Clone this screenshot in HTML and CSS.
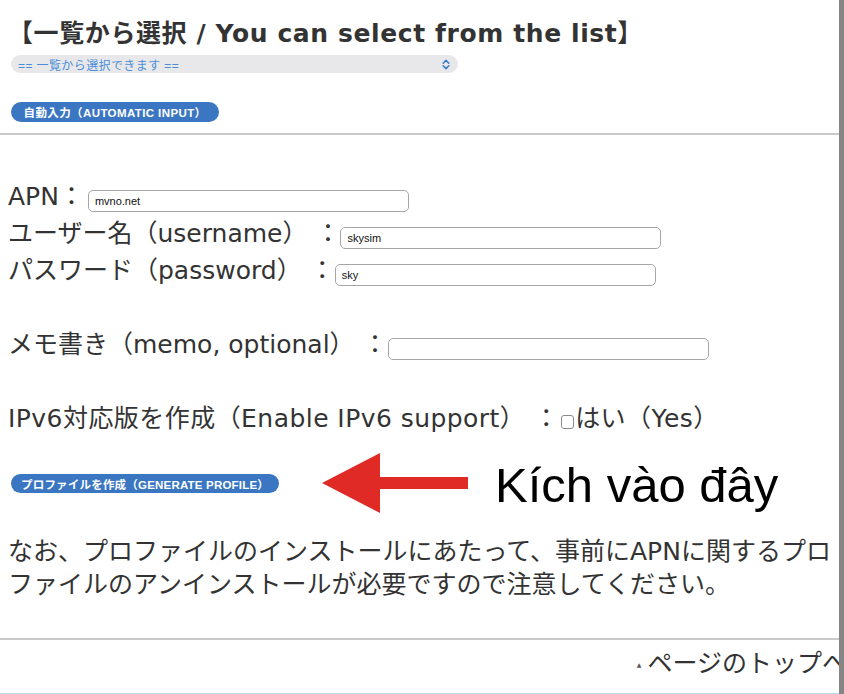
FILE: index.html
```html
<!DOCTYPE html>
<html lang="ja">
<head>
    <meta charset="UTF-8">
    <meta name="viewport" content="width=device-width, initial-scale=1.0">
    <title>APN Profile</title>
    <link rel="stylesheet" href="styles.css">
</head>
<body>
    <div class="page">
        <main class="content">
            <h2 class="title">【一覧から選択 / You can select from the list】</h2>
            <div class="select">
                <span>== 一覧から選択できます ==</span>
                <svg class="chevrons" width="8" height="11" viewBox="0 0 8 11">
                    <path d="M1.2 4.2 L4 1.4 L6.8 4.2 M1.2 6.8 L4 9.6 L6.8 6.8" fill="none" stroke="#3b7fd0" stroke-width="1.6" stroke-linecap="round" stroke-linejoin="round"/>
                </svg>
            </div>
            <button type="button" class="pill-btn auto-btn">自動入力（AUTOMATIC INPUT）</button>
            <hr class="rule">

            <form class="apn-form">
                <div class="row apn">APN：<input type="text" class="field" value="mvno.net"></div>
                <div class="row">ユーザー名（username） ：<input type="text" class="field" value="skysim"></div>
                <div class="row">パスワード（password） ：<input type="text" class="field" value="sky"></div>
                <div class="row blank"></div>
                <div class="row">メモ書き（memo, optional） ：<input type="text" class="field"></div>
                <div class="row blank"></div>
                <div class="row ipv6">IPv6対応版を作成（Enable IPv6 support） ：<input type="checkbox" class="check">はい（Yes）</div>
            </form>

            <div class="generate">
                <button type="button" class="pill-btn gen-btn">プロファイルを作成（GENERATE PROFILE）</button>
                <!-- annotation over the page -->
                <svg class="arrow" width="146" height="62" viewBox="0 0 146 62">
                    <polygon points="0,31 58,1 58,25 146,25 146,37 58,37 58,61" fill="#e02a25"/>
                </svg>
                <span class="callout">Kích vào đây</span>
            </div>

            <p class="note">なお、プロファイルのインストールにあたって、事前にAPNに関するプロファイルのアンインストールが必要ですので注意してください。</p>
            <hr class="rule">
            <div class="to-top"><span class="tri">▲</span>ページのトップへ</div>
            <div class="bottom-line"></div>
        </main>
        <div class="scrollbar"></div>
    </div>
</body>
</html>
```

FILE: styles.css
```css
body {
    margin: 0;
    background-color: #ffffff;
    font-family: "DejaVu Sans", "Noto Sans CJK JP", sans-serif;
    color: #333;
}
.page {
    display: flex;
    height: 694px;
    overflow: hidden;
}
.content {
    flex: 1;
    overflow: hidden;
    position: relative;
}
.scrollbar {
    width: 5px;
    background-color: #858585;
}
.title {
    font-size: 25px;
    line-height: 30px;
    font-weight: bold;
    letter-spacing: 0.6px;
    margin: 19px 0 0 8px;
    white-space: nowrap;
}
.select {
    display: flex;
    justify-content: space-between;
    align-items: center;
    width: 447px;
    height: 18px;
    margin: 6px 0 0 11px;
    padding: 0 8px 0 7px;
    box-sizing: border-box;
    background-color: #e8e8ea;
    border-radius: 9px;
    font-family: "Liberation Sans", "Noto Sans CJK JP", sans-serif;
    font-size: 12px;
    color: #4a8ed8;
    letter-spacing: 0.4px;
}
.pill-btn {
    display: block;
    margin-left: 11px;
    padding: 0;
    border: none;
    border-radius: 10px;
    background-color: #3a76c2;
    color: white;
    font-family: "Liberation Sans", "Noto Sans CJK JP", sans-serif;
    font-weight: bold;
    font-size: 11.5px;
    letter-spacing: 0.4px;
    cursor: pointer;
}
.auto-btn {
    width: 208px;
    height: 20px;
    margin-top: 29px;
}
.rule {
    border: none;
    border-top: 2px solid #c9c9c9;
    margin: 11px 0 0 0;
}
.apn-form {
    margin: 43px 0 0 8px;
    font-size: 25px;
    line-height: 37px;
}
.row {
    height: 37px;
    white-space: nowrap;
}
.ipv6 {
    letter-spacing: 0.45px;
}
.field {
    width: 321px;
    height: 22px;
    margin: 0;
    padding: 0 6px;
    box-sizing: border-box;
    border: 1px solid #a6a6a6;
    border-radius: 5px;
    font-family: "Liberation Sans", sans-serif;
    font-size: 11px;
    letter-spacing: 0;
    color: #111;
    vertical-align: baseline;
}
.apn .field {
    margin-left: 4px;
}
.check {
    appearance: none;
    box-sizing: border-box;
    width: 13px;
    height: 14px;
    margin: 0 1px 0 2px;
    border: 1px solid #8a8a8a;
    border-radius: 3px;
    vertical-align: -2px;
}
.generate {
    position: relative;
    margin-top: 37px;
    height: 19px;
}
.gen-btn {
    width: 268px;
    height: 19px;
    letter-spacing: 0.2px;
}
.arrow {
    position: absolute;
    left: 322px;
    top: -22px;
}
.callout {
    position: absolute;
    left: 495px;
    top: -17px;
    font-family: "Liberation Sans", sans-serif;
    font-size: 49px;
    line-height: 56px;
    color: #000;
    white-space: nowrap;
}
.note {
    margin: 42px 0 0 8px;
    font-size: 25px;
    line-height: 33px;
}
.note + .rule {
    margin-top: 37px;
}
.to-top {
    margin: 7px -8px 0 0;
    text-align: right;
    font-size: 25px;
    line-height: 33px;
    white-space: nowrap;
}
.tri {
    font-size: 6px;
    vertical-align: 5px;
    margin-right: 6px;
    color: #555;
}
.bottom-line {
    margin-top: 12px;
    border-top: 2px solid #b5dcec;
}
```
